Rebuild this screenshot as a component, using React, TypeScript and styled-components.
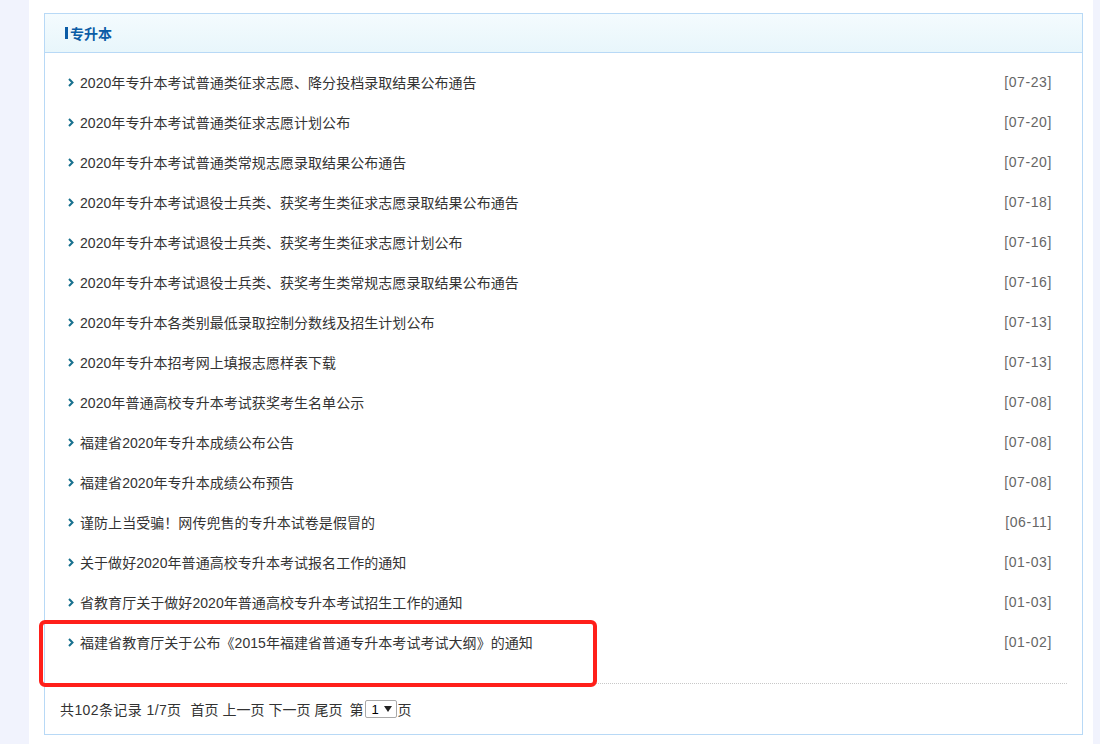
import styled, { createGlobalStyle } from 'styled-components';

const GlobalStyle = createGlobalStyle`
  html, body {
    margin: 0;
    padding: 0;
    background: #f1f3fd;
    font-family: "Liberation Sans", "Noto Sans CJK SC", sans-serif;
  }
`;

// white page column between the lavender strips
const Page = styled.div`
  width: 1064px;
  height: 744px;
  margin-left: 29px;
  background: #ffffff;
  padding: 13px 10px 0 15px;
  box-sizing: border-box;
  position: relative;
  overflow: hidden;
`;

const Panel = styled.div`
  width: 1039px;
  border: 1px solid #b8d9f6;
  box-sizing: border-box;
  background: #fff;
`;

const PanelHeader = styled.div`
  height: 39px;
  box-sizing: border-box;
  border-bottom: 1px solid #b8d9f6;
  background: linear-gradient(to bottom, #f4fbfe, #e8f6fb);
  display: flex;
  align-items: center;
  padding-left: 20px;
`;

const Title = styled.h2`
  margin: 0;
  font-size: 14px;
  font-weight: bold;
  color: #0b5ca6;
  border-left: 3px solid #0b5ca6;
  line-height: 12px;
  padding-left: 2px;
  font-family: "Noto Sans CJK SC", sans-serif;
`;

const List = styled.ul`
  list-style: none;
  margin: 0;
  padding: 9px 30px 0 23px;
`;

const Row = styled.li`
  height: 40px;
  display: flex;
  align-items: center;
  justify-content: space-between;
  font-size: 14px;
`;

const Link = styled.a`
  display: flex;
  align-items: center;
  gap: 6px;
  color: #333;
  text-decoration: none;
  letter-spacing: 0.05px;
  font-family: "Liberation Sans", "Noto Sans CJK SC", sans-serif;
`;

const DateText = styled.span`
  color: #666;
  font-size: 14px;
  letter-spacing: 0.6px;
  font-family: "Liberation Sans", sans-serif;
`;

const Divider = styled.div`
  margin: 21px 15px 0 15px;
  border-top: 1px dotted #c8c8c8;
`;

const Pager = styled.div`
  height: 50px;
  display: flex;
  align-items: center;
  padding-left: 15px;
  font-size: 14px;
  color: #333;
  gap: 4px;
`;

const Count = styled.span`
  letter-spacing: 0.4px;
  margin-right: 5px;
`;

const PageSelect = styled.span`
  display: inline-flex;
  align-items: center;
  justify-content: space-between;
  width: 32px;
  height: 18px;
  border: 1px solid #a9a9a9;
  border-radius: 2px;
  padding: 0 4px 0 6px;
  box-sizing: border-box;
  font-size: 13px;
  color: #000;
  margin: 0 -3px;
  &::after {
    content: "";
    border-left: 4px solid transparent;
    border-right: 4px solid transparent;
    border-top: 6px solid #222;
  }
`;

const Last = styled.span`
  margin-right: 3px;
`;

// red annotation frame drawn over the last row
const Highlight = styled.div`
  position: absolute;
  left: 10px;
  top: 620px;
  width: 558px;
  height: 67px;
  border: 4px solid #ff1f1a;
  border-radius: 6px;
  box-sizing: border-box;
  pointer-events: none;
`;

const Chevron = () => (
  <svg width="6" height="9" viewBox="0 0 6 9">
    <path d="M1 1 L4.5 4.5 L1 8" fill="none" stroke="#17708e" strokeWidth="2" />
  </svg>
);

const items: [string, string][] = [
  ['2020年专升本考试普通类征求志愿、降分投档录取结果公布通告', '07-23'],
  ['2020年专升本考试普通类征求志愿计划公布', '07-20'],
  ['2020年专升本考试普通类常规志愿录取结果公布通告', '07-20'],
  ['2020年专升本考试退役士兵类、获奖考生类征求志愿录取结果公布通告', '07-18'],
  ['2020年专升本考试退役士兵类、获奖考生类征求志愿计划公布', '07-16'],
  ['2020年专升本考试退役士兵类、获奖考生类常规志愿录取结果公布通告', '07-16'],
  ['2020年专升本各类别最低录取控制分数线及招生计划公布', '07-13'],
  ['2020年专升本招考网上填报志愿样表下载', '07-13'],
  ['2020年普通高校专升本考试获奖考生名单公示', '07-08'],
  ['福建省2020年专升本成绩公布公告', '07-08'],
  ['福建省2020年专升本成绩公布预告', '07-08'],
  ['谨防上当受骗！网传兜售的专升本试卷是假冒的', '06-11'],
  ['关于做好2020年普通高校专升本考试报名工作的通知', '01-03'],
  ['省教育厅关于做好2020年普通高校专升本考试招生工作的通知', '01-03'],
  ['福建省教育厅关于公布《2015年福建省普通专升本考试考试大纲》的通知', '01-02'],
];

export default function App() {
  return (
    <>
      <GlobalStyle />
      <Page>
        <Panel>
          <PanelHeader>
            <Title>专升本</Title>
          </PanelHeader>
          <List>
            {items.map(([title, date]) => (
              <Row key={title + date}>
                <Link href="#">
                  <Chevron />
                  {title}
                </Link>
                <DateText>[{date}]</DateText>
              </Row>
            ))}
          </List>
          <Divider />
          <Pager>
            <Count>共102条记录 1/7页</Count>
            <span>首页</span>
            <span>上一页</span>
            <span>下一页</span>
            <Last>尾页</Last>
            <span>第</span>
            <PageSelect>1</PageSelect>
            <span>页</span>
          </Pager>
        </Panel>
        <Highlight />
      </Page>
    </>
  );
}
